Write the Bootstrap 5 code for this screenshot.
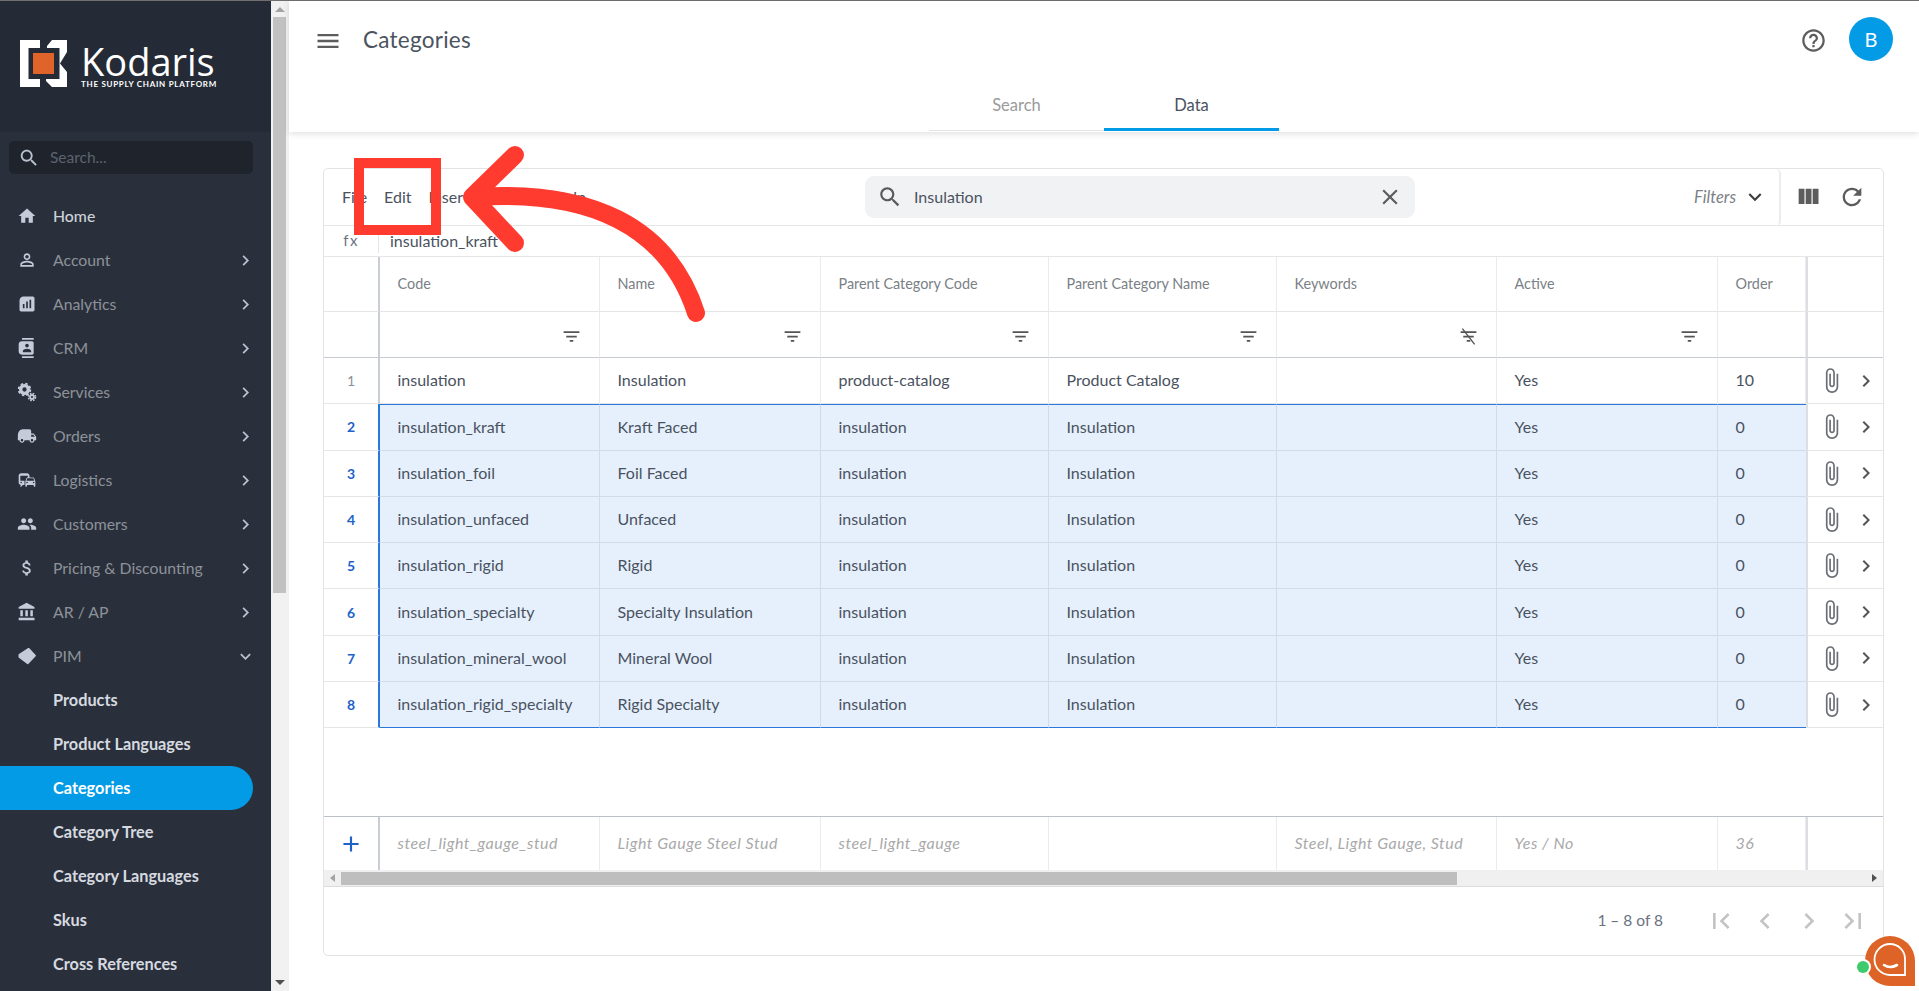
<!DOCTYPE html>
<html lang="en">
<head>
<meta charset="utf-8">
<title>Categories</title>
<link rel="stylesheet" href="https://cdn.jsdelivr.net/npm/bootstrap@5.3.0/dist/css/bootstrap.min.css">
<style>
html,body{height:991px;overflow:hidden}
body{font-family:"Lato","Noto Sans",sans-serif;font-size:16px;color:#424a57;background:#fff;position:relative}
.ic{width:24px;height:24px;fill:currentColor;flex:none;display:block}
.shell{height:991px;border-top:1px solid #6f6f6f}
.side{width:271px;flex:none;background:#2a303b;overflow:hidden;height:990px}
.brand{height:131px;background:#252b36;padding:39px 0 0 20px;gap:14px}
.brand-text{margin-top:2px}
.brand-name{font-size:38px;line-height:38px;color:#fff;font-family:"Open Sans",sans-serif}
.brand-tag{font-size:8px;line-height:8px;color:#fff;font-weight:700;letter-spacing:.72px;white-space:nowrap}
.side-search{margin:9px 18px 0 9px;height:33px;background:#1f242c;border-radius:5px;padding-left:9px;gap:10px;color:#b8c2cf}
.side-search .ic{width:22px;height:22px}
.side-search span{color:#5c636e;font-size:15.5px}
.side-nav{padding-top:20px}
.side-link{height:44px;padding:0 15px 0 17px;color:#8d929a;font-size:15.8px;gap:16px;text-decoration:none;white-space:nowrap}
.side-link .ic{width:20px;height:20px;color:#c3ccd8}
.side-link .arr{margin-left:auto;width:21px;height:21px;color:#b9c3d0}
.side-link.top{color:#cdd3da;font-weight:500}
.side-sub{height:44px;padding-left:53px;color:#d6dae0;font-size:16.3px;font-weight:700;text-decoration:none;margin-right:18px;white-space:nowrap}
.side-sub.on{background:#039be5;color:#fff;border-radius:0 22px 22px 0}
.vbar{width:18px;flex:none;background:#f1f1f1;height:990px;padding:0 3px 0 2px}
.vbar i{display:block;background:#c1c1c1}
.vthumb{height:576px}
.tri-u,.tri-d{width:0;height:0;border-left:5px solid transparent;border-right:5px solid transparent;margin:0 auto}
.tri-u{border-bottom:5px solid #a3a3a3;margin-top:6px;margin-bottom:5px}
.tri-d{border-top:5px solid #505050;margin-top:auto;margin-bottom:6px}
.work{min-width:0;height:990px}
.topbar{height:131px;background:#fff;box-shadow:0 2px 6px rgba(0,0,0,.12);position:relative}
.top-row{height:79px;padding:0 26px 0 25px}
.menu-ic{width:28px;height:28px;color:#5d5d5d}
.page-title{font-size:22.5px;color:#4b5360;margin-left:21px;letter-spacing:.25px;margin-top:-2px}
.help-ic{width:27px;height:27px;color:#5d5d5d;margin-right:22px}
.avatar{width:44px;height:44px;border-radius:50%;background:#039be5;color:#fff;font-size:20px;margin-top:-3px}
.tabs{width:350px;margin:0 auto;height:51px;border-bottom:1px solid #e3e3e3}
.tab-item{width:175px;text-align:center;font-size:16.5px;color:#9a9a9a;padding-top:13px;height:51px}
.tab-item.on{color:#4a5260;border-bottom:3px solid #039be5}
.panel{margin:36px 35px 0 34px;height:788px;border:1px solid #e3e3e3;border-radius:5px;overflow:hidden;background:#fff}
.tool{height:57px;border-bottom:1px solid #e6e6e6}
.menus{width:384px;padding-left:18px;gap:17px;font-size:16px;color:#4a5260}
.finder{width:550px;height:42px;background:#f1f2f4;border-radius:9px;margin-left:157px;padding:0 12px;color:#5b5b5b}
.finder .txt{margin-left:11px;font-size:16px;color:#4a5260}
.finder .ic{width:26px;height:26px}
.filters{width:366px;height:57px;border-right:2px solid #ececec;border-radius:0 5px 5px 0;padding-right:11px;color:#7b7f86;font-style:italic;font-size:16.5px;gap:6px}
.filters .ic{color:#3f3f3f;width:26px;height:26px}
.tool-ics{padding-left:13px;gap:16px;color:#5c5c5c}
.tool-ics .ic{width:28px;height:28px}
.fx{height:31px;border-bottom:1px solid #e6e6e6}
.fx-l{width:55px;text-align:center;font-size:15px;color:#6d7480;letter-spacing:1.5px;border-right:1px solid #e6e6e6;height:24px;line-height:22px}
.fx-v{padding-left:11px;font-size:16px;color:#4a5260}
.grid-t{table-layout:fixed;width:1559px;margin:0;border-collapse:separate;border-spacing:0;--bs-table-bg:transparent;--bs-table-border-color:#e6e6e6}
.grid-t td,.grid-t th{border:0;border-right:1px solid #ebebeb;border-bottom:1px solid #e6e6e6;padding:0 0 1px 17.5px;vertical-align:middle;white-space:nowrap;font-weight:400;font-size:16px;color:#4a5260;box-shadow:none;overflow:hidden}
.grid-t .hd th{height:55px;font-size:14.4px;color:#7b7f86}
.grid-t .ft td{height:46px;border-bottom:1px solid #c5cad3;text-align:right;padding:0 17px 0 0;color:#555}
.grid-t .ft .ic{display:inline-block;width:21px;height:21px;vertical-align:middle}
.grid-t .dt td{height:46.3px}
.grid-t td.num,.grid-t th.num{padding:0;text-align:center;border-right:2px solid #c9ced6;color:#8a8f98;font-size:14px}
.grid-t td.edge,.grid-t th.edge{padding:0;border-left:2px solid #dcdee3;border-right:0}
.grid-t .sel td.num{color:#1d62c9;font-weight:700;border-right-color:#2a78dc}
.grid-t .sel td.cell{background:#e5f0fc;border-right-color:#d2dbe8;border-bottom-color:#d2dbe8}
.grid-t .sel.first td.cell{border-top:1px solid #2a78dc}
.grid-t .sel.last td.cell{border-bottom:1px solid #2a78dc}
.grid-t .sel td.cell.end{border-right:0}
.acts{gap:9px;padding-left:10px;color:#6b6f75}
.acts .clip{width:27px;height:27px}
.acts .go{width:24px;height:24px;color:#555}
.grid-t .gap-row td{height:89px;border-right:0;border-bottom:1px solid #bcc1c8}
.grid-t .add td{height:53px;border-bottom:0;color:#a9a9a9;font-style:italic;letter-spacing:.5px}
.grid-t .add td.num{color:#1d62c9}
.grid-t .add .num .ic{width:26px;height:26px;margin:0 auto}
.hbar{height:17px;background:#f0f0f0;border-bottom:1px solid #dcdcdc;padding:2px 0}
.hbar i{display:block;background:#bebebe;height:13px;width:1116px;margin-left:6px}
.tri-l,.tri-r{width:0;height:0;border-top:4.5px solid transparent;border-bottom:4.5px solid transparent}
.tri-l{border-right:5px solid #a3a3a3;margin-left:6px}
.tri-r{border-left:5px solid #505050;margin-left:auto;margin-right:6px}
.pager{height:67px;padding-right:14px;color:#c4c4c4}
.pager .cnt{color:#6a7280;font-size:15.5px;margin-right:30px}
.pager .ic{width:32px;height:32px;margin-left:12px}
.over{position:absolute;left:0;top:0;width:1919px;height:991px;pointer-events:none}
</style>
</head>
<body>
<svg width="0" height="0" class="d-none">
<symbol id="i-home" viewBox="0 0 24 24"><path d="M10 20v-6h4v6h5v-8h3L12 3 2 12h3v8z"/></symbol>
<symbol id="i-person" viewBox="0 0 24 24"><path d="M12 5.9c1.16 0 2.1.94 2.1 2.1s-.94 2.1-2.1 2.1S9.9 9.16 9.9 8s.94-2.1 2.1-2.1m0 9c2.97 0 6.1 1.46 6.1 2.1v1.1H5.9V17c0-.64 3.13-2.1 6.1-2.1M12 4C9.79 4 8 5.79 8 8s1.79 4 4 4 4-1.79 4-4-1.79-4-4-4zm0 9c-2.67 0-8 1.34-8 4v3h16v-3c0-2.66-5.33-4-8-4z"/></symbol>
<symbol id="i-analytics" viewBox="0 0 24 24"><path d="M19 3H8C5 3 3 5 3 8v11c0 1.1.9 2 2 2h14c1.1 0 2-.9 2-2V5c0-1.1-.9-2-2-2zM9 17H7v-5h2v5zm4 0h-2V9h2v8zm4 0h-2V7h2v10z"/></symbol>
<symbol id="i-contacts" viewBox="0 0 24 24"><path d="M20 0H6v2h14V0zM6 24h14v-2H6v2zM18 4H6C3 4 2 6 2 8v8c0 2 1 4 4 4h12c1.1 0 2-.9 2-2V6c0-1.1-.9-2-2-2zm-6 2.75c1.24 0 2.25 1.01 2.25 2.25s-1.01 2.25-2.25 2.25S9.75 10.24 9.75 9 10.76 6.75 12 6.75zM17 17H7v-1.5c0-1.67 3.33-2.5 5-2.5s5 .83 5 2.5V17z"/></symbol>
<symbol id="i-gears" viewBox="0 0 24 24"><circle cx="9" cy="9" r="4.6" fill="none" stroke="currentColor" stroke-width="4"/><circle cx="9" cy="9" r="7" fill="none" stroke="currentColor" stroke-width="2.2" stroke-dasharray="3 2.5"/><circle cx="18" cy="18" r="2.4" fill="none" stroke="currentColor" stroke-width="2.2"/><circle cx="18" cy="18" r="4.4" fill="none" stroke="currentColor" stroke-width="1.6" stroke-dasharray="2 1.5"/></symbol>
<symbol id="i-truck" viewBox="0 0 24 24"><path d="M20 9h-3V6c0-1-1-2-2-2H7C3 4 1 8 1 12v5h2c0 1.66 1.34 3 3 3s3-1.34 3-3h6c0 1.66 1.34 3 3 3s3-1.34 3-3h2v-4l-3-4zM6 18.5c-.83 0-1.5-.67-1.5-1.5s.67-1.5 1.5-1.5 1.5.67 1.5 1.5-.67 1.5-1.5 1.5zm13.5-8l1.96 2.5H17v-2.5h2.5zm-1.5 8c-.83 0-1.5-.67-1.5-1.5s.67-1.5 1.5-1.5 1.5.67 1.5 1.5-.67 1.5-1.5 1.5z"/></symbol>
<symbol id="i-commute" viewBox="0 0 24 24"><path d="M12 4H5C3.34 4 2 5.34 2 7v8c0 1.66 1.34 3 3 3l-1 1v1h1l2-2h2v-5H4V6.99L13 7v2h2V7c0-1.66-1.34-3-3-3zM5 14c.55 0 1 .45 1 1s-.45 1-1 1-1-.45-1-1 .45-1 1-1zm15.57-4.34c-.14-.4-.52-.66-.97-.66h-7.19c-.46 0-.83.26-.98.66L10 13.77l.01 5.51c0 .38.31.72.69.72h.62c.38 0 .68-.38.68-.76V18h8v1.24c0 .38.31.76.69.76h.61c.38 0 .69-.34.69-.72l.01-1.37v-4.14l-1.43-4.11zm-8.16.34h7.19l1.03 3h-9.25l1.03-3zM12 16c-.55 0-1-.45-1-1s.45-1 1-1 1 .45 1 1-.45 1-1 1zm8 0c-.55 0-1-.45-1-1s.45-1 1-1 1 .45 1 1-.45 1-1 1z"/></symbol>
<symbol id="i-people" viewBox="0 0 24 24"><path d="M16 11c1.66 0 2.99-1.34 2.99-3S17.66 5 16 5c-1.66 0-3 1.34-3 3s1.34 3 3 3zm-8 0c1.66 0 2.99-1.34 2.99-3S9.66 5 8 5C6.34 5 5 6.34 5 8s1.34 3 3 3zm0 2c-2.33 0-7 1.17-7 3.5V19h14v-2.5c0-2.33-4.67-3.5-7-3.5zm8 0c-.29 0-.62.02-.97.05 1.16.84 1.97 1.97 1.97 3.45V19h6v-2.5c0-2.33-4.67-3.5-7-3.5z"/></symbol>
<symbol id="i-money" viewBox="0 0 24 24"><path d="M11.8 10.9c-2.27-.59-3-1.2-3-2.15 0-1.09 1.01-1.85 2.7-1.85 1.78 0 2.44.85 2.5 2.1h2.21c-.07-1.72-1.12-3.3-3.21-3.81V3h-3v2.16c-1.94.42-3.5 1.68-3.5 3.61 0 2.31 1.91 3.46 4.7 4.13 2.5.6 3 1.48 3 2.41 0 .69-.49 1.79-2.7 1.79-2.06 0-2.87-.92-2.98-2.1h-2.2c.12 2.19 1.76 3.42 3.68 3.83V21h3v-2.15c1.95-.37 3.5-1.5 3.5-3.55 0-2.84-2.43-3.81-4.7-4.4z"/></symbol>
<symbol id="i-bank" viewBox="0 0 24 24"><path d="M4 10v7h3v-7H4zm6 0v7h3v-7h-3zM2 22h19v-3H2v3zm14-12v7h3v-7h-3zm-4.5-9L2 6v2h19V6l-9.5-5z"/></symbol>
<symbol id="i-tag" viewBox="0 0 24 24"><path d="M3 10.5 14 3.5 21.5 11.5 13 20.5 3 13z" stroke="currentColor" stroke-width="2.4" stroke-linejoin="round"/></symbol>
<symbol id="i-right" viewBox="0 0 24 24"><path d="M10 6L8.59 7.41 13.17 12l-4.58 4.59L10 18l6-6z"/></symbol>
<symbol id="i-down" viewBox="0 0 24 24"><path d="M16.59 8.59L12 13.17 7.41 8.59 6 10l6 6 6-6z"/></symbol>
<symbol id="i-search" viewBox="0 0 24 24"><path d="M15.5 14h-.79l-.28-.27C15.41 12.59 16 11.11 16 9.5 16 5.91 13.09 3 9.5 3S3 5.91 3 9.5 5.91 16 9.5 16c1.61 0 3.09-.59 4.23-1.57l.27.28v.79l5 4.99L20.49 19l-4.99-5zm-6 0C7.01 14 5 11.99 5 9.5S7.01 5 9.5 5 14 7.01 14 9.5 11.99 14 9.5 14z"/></symbol>
<symbol id="i-menu" viewBox="0 0 24 24"><path d="M3 18h18v-2H3v2zm0-5h18v-2H3v2zm0-7v2h18V6H3z"/></symbol>
<symbol id="i-help" viewBox="0 0 24 24"><path d="M11 18h2v-2h-2v2zm1-16C6.48 2 2 6.48 2 12s4.48 10 10 10 10-4.48 10-10S17.52 2 12 2zm0 18c-4.41 0-8-3.59-8-8s3.59-8 8-8 8 3.59 8 8-3.59 8-8 8zm0-14c-2.21 0-4 1.79-4 4h2c0-1.1.9-2 2-2s2 .9 2 2c0 2-3 1.75-3 5h2c0-2.25 3-2.5 3-5 0-2.21-1.79-4-4-4z"/></symbol>
<symbol id="i-close" viewBox="0 0 24 24"><path d="M19 6.41L17.59 5 12 10.59 6.41 5 5 6.41 10.59 12 5 17.59 6.41 19 12 13.41 17.59 19 19 17.59 13.41 12z"/></symbol>
<symbol id="i-cols" viewBox="0 0 24 24"><path d="M10 18h5V5h-5v13zm-6 0h5V5H4v13zM16 5v13h5V5h-5z"/></symbol>
<symbol id="i-refresh" viewBox="0 0 24 24"><path d="M17.65 6.35C16.2 4.9 14.21 4 12 4c-4.42 0-7.99 3.58-7.99 8s3.57 8 7.99 8c3.73 0 6.84-2.55 7.73-6h-2.08c-.82 2.33-3.04 4-5.65 4-3.31 0-6-2.69-6-6s2.69-6 6-6c1.66 0 3.14.69 4.22 1.78L13 11h7V4l-2.35 2.35z"/></symbol>
<symbol id="i-clip" viewBox="0 0 24 24"><path d="M16.5 6v11.5c0 2.21-1.79 4-4 4s-4-1.79-4-4V5c0-1.38 1.12-2.5 2.5-2.5s2.5 1.12 2.5 2.5v10.5c0 .55-.45 1-1 1s-1-.45-1-1V6H10v9.5c0 1.38 1.12 2.5 2.5 2.5s2.5-1.12 2.5-2.5V5c0-2.21-1.79-4-4-4S7 2.79 7 5v12.5c0 3.04 2.46 5.5 5.5 5.5s5.5-2.46 5.5-5.5V6h-1.5z"/></symbol>
<symbol id="i-filter" viewBox="0 0 24 24"><path d="M10 18h4v-2h-4v2zM3 6v2h18V6H3zm3 7h12v-2H6v2z"/></symbol>
<symbol id="i-nofilter" viewBox="0 0 24 24"><path d="M10 18h4v-2h-4v2zM3 6v2h18V6H3zm3 7h12v-2H6v2z"/><path d="M5 3l14 18" stroke="currentColor" stroke-width="1.6"/></symbol>
<symbol id="i-first" viewBox="0 0 24 24"><path d="M18.41 16.59L13.82 12l4.59-4.59L17 6l-6 6 6 6zM6 6h2v12H6z"/></symbol>
<symbol id="i-last" viewBox="0 0 24 24"><path d="M5.59 7.41L10.18 12l-4.59 4.59L7 18l6-6-6-6zM16 6h2v12h-2z"/></symbol>
<symbol id="i-prev" viewBox="0 0 24 24"><path d="M15.41 7.41L14 6l-6 6 6 6 1.41-1.41L10.83 12z"/></symbol>
<symbol id="i-add" viewBox="0 0 24 24"><path d="M19 13h-6v6h-2v-6H5v-2h6V5h2v6h6v2z"/></symbol>
</svg>

<div class="shell d-flex">
  <aside class="side d-flex flex-column">
    <div class="brand d-flex align-items-start">
      <svg width="47" height="47" viewBox="0 0 47 47">
        <path fill="#fff" d="M0 0h20v9H9v29h11v9H0z"/>
        <path fill="#fff" d="M27 6 32 0H47V12L40 23.5 47 32V47H32L26 41z"/>
        <rect x="8.5" y="8" width="31" height="31" fill="#252b36"/>
        <rect x="13" y="13" width="21" height="21" fill="#e0632a"/>
      </svg>
      <div class="brand-text">
        <div class="brand-name">Kodaris</div>
        <div class="brand-tag">THE SUPPLY CHAIN PLATFORM</div>
      </div>
    </div>
    <div class="side-search d-flex align-items-center"><svg class="ic"><use href="#i-search"/></svg><span>Search...</span></div>
    <nav class="side-nav">
      <a class="side-link top d-flex align-items-center"><svg class="ic"><use href="#i-home"/></svg>Home</a>
      <a class="side-link d-flex align-items-center"><svg class="ic"><use href="#i-person"/></svg>Account<svg class="ic arr"><use href="#i-right"/></svg></a>
      <a class="side-link d-flex align-items-center"><svg class="ic"><use href="#i-analytics"/></svg>Analytics<svg class="ic arr"><use href="#i-right"/></svg></a>
      <a class="side-link d-flex align-items-center"><svg class="ic"><use href="#i-contacts"/></svg>CRM<svg class="ic arr"><use href="#i-right"/></svg></a>
      <a class="side-link d-flex align-items-center"><svg class="ic"><use href="#i-gears"/></svg>Services<svg class="ic arr"><use href="#i-right"/></svg></a>
      <a class="side-link d-flex align-items-center"><svg class="ic"><use href="#i-truck"/></svg>Orders<svg class="ic arr"><use href="#i-right"/></svg></a>
      <a class="side-link d-flex align-items-center"><svg class="ic"><use href="#i-commute"/></svg>Logistics<svg class="ic arr"><use href="#i-right"/></svg></a>
      <a class="side-link d-flex align-items-center"><svg class="ic"><use href="#i-people"/></svg>Customers<svg class="ic arr"><use href="#i-right"/></svg></a>
      <a class="side-link d-flex align-items-center"><svg class="ic"><use href="#i-money"/></svg>Pricing &amp; Discounting<svg class="ic arr"><use href="#i-right"/></svg></a>
      <a class="side-link d-flex align-items-center"><svg class="ic"><use href="#i-bank"/></svg>AR / AP<svg class="ic arr"><use href="#i-right"/></svg></a>
      <a class="side-link d-flex align-items-center"><svg class="ic"><use href="#i-tag"/></svg>PIM<svg class="ic arr"><use href="#i-down"/></svg></a>
      <a class="side-sub d-flex align-items-center">Products</a>
      <a class="side-sub d-flex align-items-center">Product Languages</a>
      <a class="side-sub on d-flex align-items-center">Categories</a>
      <a class="side-sub d-flex align-items-center">Category Tree</a>
      <a class="side-sub d-flex align-items-center">Category Languages</a>
      <a class="side-sub d-flex align-items-center">Skus</a>
      <a class="side-sub d-flex align-items-center">Cross References</a>
    </nav>
  </aside>
  <div class="vbar d-flex flex-column"><div class="tri-u"></div><i class="vthumb"></i><div class="tri-d"></div></div>
  <main class="work flex-grow-1">
    <header class="topbar">
      <div class="top-row d-flex align-items-center">
        <svg class="ic menu-ic"><use href="#i-menu"/></svg>
        <div class="page-title">Categories</div>
        <svg class="ic help-ic ms-auto"><use href="#i-help"/></svg>
        <div class="avatar d-flex align-items-center justify-content-center">B</div>
      </div>
      <div class="tabs d-flex"><div class="tab-item">Search</div><div class="tab-item on">Data</div></div>
    </header>
    <section class="panel">
      <div class="tool d-flex align-items-center">
        <div class="menus d-flex"><span>File</span><span>Edit</span><span>Insert</span><span>Format</span><span>Help</span></div>
        <div class="finder d-flex align-items-center"><svg class="ic"><use href="#i-search"/></svg><span class="txt">Insulation</span><svg class="ic ms-auto"><use href="#i-close"/></svg></div>
        <div class="filters d-flex align-items-center justify-content-end">Filters<svg class="ic"><use href="#i-down"/></svg></div>
        <div class="tool-ics d-flex align-items-center"><svg class="ic"><use href="#i-cols"/></svg><svg class="ic"><use href="#i-refresh"/></svg></div>
      </div>
      <div class="fx d-flex align-items-center"><div class="fx-l">fx</div><div class="fx-v">insulation_kraft</div></div>
      <table class="table grid-t">
        <colgroup><col style="width:56px"><col style="width:220px"><col style="width:221px"><col style="width:228px"><col style="width:228px"><col style="width:220px"><col style="width:221px"><col style="width:88px"><col style="width:77px"></colgroup>
        <thead>
          <tr class="hd"><th class="num"></th><th>Code</th><th>Name</th><th>Parent Category Code</th><th>Parent Category Name</th><th>Keywords</th><th>Active</th><th>Order</th><th class="edge"></th></tr>
          <tr class="ft"><td class="num"></td>
            <td><svg class="ic"><use href="#i-filter"/></svg></td><td><svg class="ic"><use href="#i-filter"/></svg></td><td><svg class="ic"><use href="#i-filter"/></svg></td><td><svg class="ic"><use href="#i-filter"/></svg></td><td><svg class="ic"><use href="#i-nofilter"/></svg></td><td><svg class="ic"><use href="#i-filter"/></svg></td><td></td><td class="edge"></td></tr>
        </thead>
        <tbody>
          <tr class="dt"><td class="num">1</td><td>insulation</td><td>Insulation</td><td>product-catalog</td><td>Product Catalog</td><td></td><td>Yes</td><td>10</td><td class="edge"><div class="acts d-flex align-items-center"><svg class="ic clip"><use href="#i-clip"/></svg><svg class="ic go"><use href="#i-right"/></svg></div></td></tr>
          <tr class="dt sel first"><td class="num">2</td><td class="cell">insulation_kraft</td><td class="cell">Kraft Faced</td><td class="cell">insulation</td><td class="cell">Insulation</td><td class="cell"></td><td class="cell">Yes</td><td class="cell end">0</td><td class="edge"><div class="acts d-flex align-items-center"><svg class="ic clip"><use href="#i-clip"/></svg><svg class="ic go"><use href="#i-right"/></svg></div></td></tr>
          <tr class="dt sel"><td class="num">3</td><td class="cell">insulation_foil</td><td class="cell">Foil Faced</td><td class="cell">insulation</td><td class="cell">Insulation</td><td class="cell"></td><td class="cell">Yes</td><td class="cell end">0</td><td class="edge"><div class="acts d-flex align-items-center"><svg class="ic clip"><use href="#i-clip"/></svg><svg class="ic go"><use href="#i-right"/></svg></div></td></tr>
          <tr class="dt sel"><td class="num">4</td><td class="cell">insulation_unfaced</td><td class="cell">Unfaced</td><td class="cell">insulation</td><td class="cell">Insulation</td><td class="cell"></td><td class="cell">Yes</td><td class="cell end">0</td><td class="edge"><div class="acts d-flex align-items-center"><svg class="ic clip"><use href="#i-clip"/></svg><svg class="ic go"><use href="#i-right"/></svg></div></td></tr>
          <tr class="dt sel"><td class="num">5</td><td class="cell">insulation_rigid</td><td class="cell">Rigid</td><td class="cell">insulation</td><td class="cell">Insulation</td><td class="cell"></td><td class="cell">Yes</td><td class="cell end">0</td><td class="edge"><div class="acts d-flex align-items-center"><svg class="ic clip"><use href="#i-clip"/></svg><svg class="ic go"><use href="#i-right"/></svg></div></td></tr>
          <tr class="dt sel"><td class="num">6</td><td class="cell">insulation_specialty</td><td class="cell">Specialty Insulation</td><td class="cell">insulation</td><td class="cell">Insulation</td><td class="cell"></td><td class="cell">Yes</td><td class="cell end">0</td><td class="edge"><div class="acts d-flex align-items-center"><svg class="ic clip"><use href="#i-clip"/></svg><svg class="ic go"><use href="#i-right"/></svg></div></td></tr>
          <tr class="dt sel"><td class="num">7</td><td class="cell">insulation_mineral_wool</td><td class="cell">Mineral Wool</td><td class="cell">insulation</td><td class="cell">Insulation</td><td class="cell"></td><td class="cell">Yes</td><td class="cell end">0</td><td class="edge"><div class="acts d-flex align-items-center"><svg class="ic clip"><use href="#i-clip"/></svg><svg class="ic go"><use href="#i-right"/></svg></div></td></tr>
          <tr class="dt sel last"><td class="num">8</td><td class="cell">insulation_rigid_specialty</td><td class="cell">Rigid Specialty</td><td class="cell">insulation</td><td class="cell">Insulation</td><td class="cell"></td><td class="cell">Yes</td><td class="cell end">0</td><td class="edge"><div class="acts d-flex align-items-center"><svg class="ic clip"><use href="#i-clip"/></svg><svg class="ic go"><use href="#i-right"/></svg></div></td></tr>
          <tr class="gap-row"><td colspan="9"></td></tr>
          <tr class="add"><td class="num"><svg class="ic"><use href="#i-add"/></svg></td><td>steel_light_gauge_stud</td><td>Light Gauge Steel Stud</td><td>steel_light_gauge</td><td></td><td>Steel, Light Gauge, Stud</td><td>Yes / No</td><td>36</td><td class="edge"></td></tr>
        </tbody>
      </table>
      <div class="hbar d-flex align-items-center"><div class="tri-l"></div><i></i><div class="tri-r"></div></div>
      <div class="pager d-flex align-items-center justify-content-end"><span class="cnt">1 – 8 of 8</span><svg class="ic"><use href="#i-first"/></svg><svg class="ic"><use href="#i-prev"/></svg><svg class="ic"><use href="#i-right"/></svg><svg class="ic"><use href="#i-last"/></svg></div>
    </section>
  </main>
</div>

<svg class="over" viewBox="0 0 1919 991">
  <rect x="359" y="163" width="77" height="67" fill="none" stroke="#ff3b30" stroke-width="10"/>
  <path d="M696 313C668 226 590 189 474 197" fill="none" stroke="#ff3b30" stroke-width="18" stroke-linecap="round"/>
  <path d="M515 155 472 197 515 243" fill="none" stroke="#ff3b30" stroke-width="18" stroke-linecap="round" stroke-linejoin="round"/>
  <path d="M1890 936a25 25 0 0 1 25 25v25h-25a25 25 0 0 1-25-25 25 25 0 0 1 25-25z" fill="#dd6426"/>
  <path d="M1890 944a15 15 0 0 1 15 15v16h-15a15.500 15.500 0 0 1 0-31z" fill="#dd6426" stroke="#fff" stroke-width="1.8"/>
  <path d="M1884 965q6 4 13 0" fill="none" stroke="#fff" stroke-width="2.6" stroke-linecap="round"/>
  <circle cx="1863" cy="967" r="8" fill="#fff"/><circle cx="1863" cy="967" r="6" fill="#3ecb6d"/>
</svg>
</body>
</html>
